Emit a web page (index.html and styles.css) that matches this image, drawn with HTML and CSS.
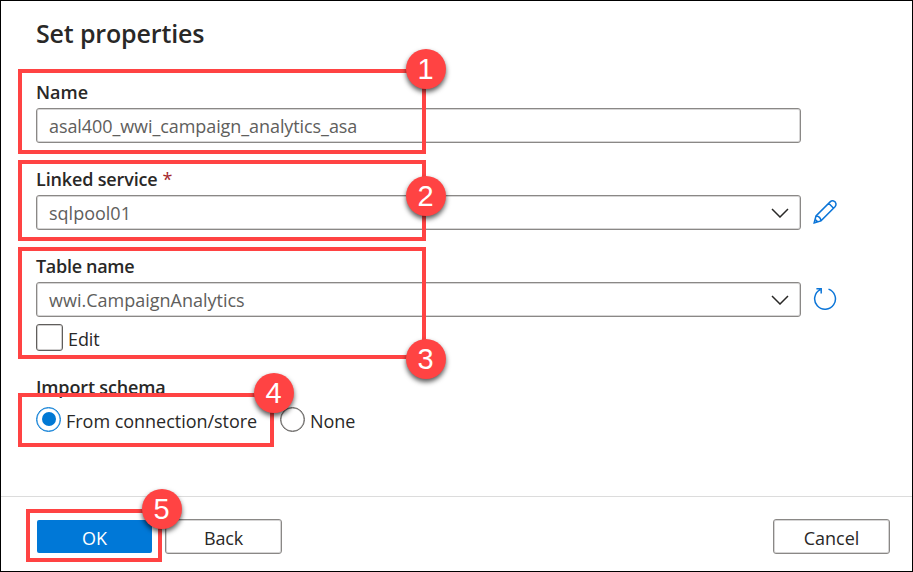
FILE: index.html
```html
<!DOCTYPE html>
<html lang="en">
<head>
<meta charset="utf-8">
<title>Set properties</title>
<link rel="stylesheet" href="styles.css">
</head>
<body>
<main class="panel">
  <form class="content">
    <h1><span>Set properties</span></h1>
    <section class="field">
      <label class="label"><span class="t-name">Name</span></label>
      <div class="row"><div class="control"><span class="t-value">asal400_wwi_campaign_analytics_asa</span></div></div>
    </section>
    <section class="field">
      <label class="label"><span class="t-linked">Linked service</span><span class="required">*</span></label>
      <div class="row">
        <div class="control"><span>sqlpool01</span>
          <svg class="chevron" viewBox="0 0 18 10"><path d="M1 1l8 8 8-8"/></svg></div>
        <svg class="icon" viewBox="0 0 24 24"><path d="M1.2 22.8L3 16 17.1 1.9Q18.7.5 20.6 1 22.7 1.6 23 3.8 23.1 5.5 22 6.8L8 20.9ZM15.7 3.3L20.6 8.2M3 16Q7.5 16.3 8 20.9M2.1 19.7Q4 20 4.4 21.9"/></svg>
      </div>
    </section>
    <section class="field table-field">
      <label class="label"><span class="t-table">Table name</span></label>
      <div class="row">
        <div class="control"><span>wwi.CampaignAnalytics</span>
          <svg class="chevron" viewBox="0 0 18 10"><path d="M1 1l8 8 8-8"/></svg></div>
        <svg class="icon" viewBox="0 0 24 24"><path d="M15.5 2.1A10.4 10.4 0 1 1 7.2 2.7M3.4 1.7H8.2V6.6"/></svg>
      </div>
      <div class="option edit"><i class="checkbox"></i><span>Edit</span></div>
    </section>
    <section class="field schema">
      <div class="label"><span class="t-schema">Import schema</span></div>
      <div class="radios">
        <div class="option first"><i class="radio selected"></i><span>From connection/store</span></div>
        <div class="option"><i class="radio"></i><span>None</span></div>
      </div>
    </section>
  </form>
  <footer>
    <button class="primary">OK</button>
    <button class="back">Back</button>
    <button class="cancel">Cancel</button>
  </footer>
  <div class="mark m1"></div><div class="mark m2"></div><div class="mark m3"></div><div class="mark m4"></div><div class="mark m5"></div>
  <b class="badge b1">1</b><b class="badge b2">2</b><b class="badge b3">3</b><b class="badge b4">4</b><b class="badge b5">5</b>
</main>
</body>
</html>
```
FILE: styles.css
```css
* { box-sizing: border-box; }
body { margin: 0; background: #fff; }
.panel {
  position: relative; width: 913px; height: 572px; overflow: hidden;
  border: 1px solid #000; background: #fff; color: #292827;
  font: 18px/24px "Open Sans", "Noto Sans", sans-serif;
}
span { white-space: nowrap; }
.content { height: 495px; padding: 16px 0 0 35px; }
h1 { margin: 0; height: 63px; font-size: 25px; line-height: 32px; font-weight: 600; letter-spacing: -.15px; }
.field { height: 87px; }
.label { display: flex; height: 28px; line-height: 24px; font-weight: 600; font-size: 18px; }
.t-linked { letter-spacing: -.15px; }
.t-table { letter-spacing: -.3px; }
.t-schema { letter-spacing: -.15px; }
.t-value { letter-spacing: -.08px; }
.required { color: #a4262c; margin-left: 5px; font-weight: 400; }
.row { display: flex; align-items: center; }
.control {
  display: flex; align-items: center; justify-content: space-between;
  width: 765px; height: 35px; padding: 0 11px 0 12px;
  border: 1px solid #8a8886; box-shadow: inset 0 0 0 1px rgba(138,136,134,.35);
  border-radius: 3px; color: #605e5c;
}
.chevron { width: 18px; height: 10px; margin-top: 0; fill: none; stroke: #292827; stroke-width: 1.5; }
.icon { width: 24px; height: 24px; margin-left: 11.5px; margin-top: -1px; fill: none; stroke: #0b75d8; stroke-width: 1.5; }
.table-field { height: 121px; }
.option { display: flex; align-items: center; }
.edit { margin-top: 7px; height: 27px; }
.edit span, .radios span { position: relative; top: 1px; }
.edit span { left: -1px; letter-spacing: -.1px; }
.checkbox { width: 27px; height: 27px; border: 1px solid #605e5c; box-shadow: inset 0 0 0 1px rgba(96,94,92,.3); border-radius: 3px; margin-right: 6px; }
.radios { display: flex; height: 26px; margin-top: 3px; }
.radios span { top: 2px; letter-spacing: -.03px; }
.first { width: 244px; }
.radio { display: grid; place-items: center; flex: none; width: 25px; height: 25px; margin-right: 5px; border: 1px solid #605e5c; box-shadow: inset 0 0 0 .6px rgba(96,94,92,.6); border-radius: 50%; }
.selected { border-color: #0078d4; box-shadow: inset 0 0 0 .6px rgba(0,120,212,.6); }
.selected::before { content: ""; width: 14px; height: 14px; background: #0078d4; border-radius: 50%; }
footer { display: flex; align-items: flex-start; height: 75px; border-top: 1px solid #dcdcdc; padding: 22px 22px 0 36px; }
button { width: 117px; height: 35px; padding: 2px 0 0; border: 1px solid #8a8886; box-shadow: inset 0 0 0 1px rgba(138,136,134,.35); border-radius: 3px; background: #fff; color: inherit; font: inherit; }
.primary { width: 115px; height: 33px; margin-top: 1px; border: 0; box-shadow: none; border-radius: 2px; background: #0078d7; color: #fff; }
.back { margin-left: 13px; letter-spacing: -.2px; }
.cancel { margin-left: auto; }
.mark { position: absolute; left: 17px; width: 408px; border: 4px solid #ff4343; }
.m1 { top: 68px; height: 85px; }
.m2 { top: 159px; height: 81px; }
.m3 { top: 246px; height: 112px; }
.m4 { top: 392px; height: 54px; width: 256px; }
.m5 { top: 508px; left: 25px; height: 53px; width: 136px; }
.badge {
  position: absolute; left: 405px; width: 40px; height: 40px; border-radius: 50%;
  background: #ff4343; color: #fff; box-shadow: 0 3px 5px rgba(0,0,0,.65);
  font: 29px/41px "Liberation Sans", Arial, sans-serif; text-align: center; padding-right: 1px;
}
.b1 { top: 48px; }
.b2 { top: 175px; }
.b3 { top: 338px; }
.b4 { top: 372px; left: 253px; }
.b5 { top: 488px; left: 141px; }
```
